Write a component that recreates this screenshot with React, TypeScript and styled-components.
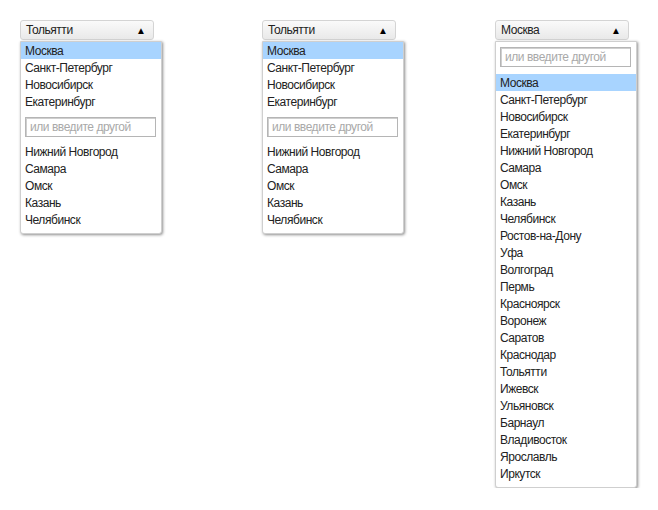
import React from 'react';
import styled, { createGlobalStyle } from 'styled-components';

const GlobalStyle = createGlobalStyle`
  body {
    margin: 0;
    background: #ffffff;
    font-family: Arial, "Liberation Sans", sans-serif;
    font-size: 12px;
    letter-spacing: -0.45px;
    color: #222222;
  }
`;

const Page = styled.div`
  display: grid;
  grid-template-columns: 242px 233px 142px;
  align-items: start;
  padding: 20px 0 0 20px;
`;

const Select = styled.div`
  display: flex;
  flex-direction: column;
  width: 142px;
`;

const Trigger = styled.div`
  box-sizing: border-box;
  display: flex;
  align-items: center;
  justify-content: space-between;
  width: 134px;
  height: 20px;
  padding: 0 7px 0 5px;
  border: 1px solid #d4d4d4;
  border-radius: 3px;
  background: linear-gradient(#fafafa, #e9e9e9);
  color: #222222;
`;

const Arrow = styled.span`
  font-size: 10px;
  letter-spacing: 0;
  color: #000000;
`;

const List = styled.div`
  box-sizing: border-box;
  width: 142px;
  margin-top: 1px;
  padding-bottom: 5px;
  border: 1px solid #cfcfcf;
  border-radius: 0 0 3px 3px;
  background: #ffffff;
  box-shadow: 1px 1px 3px rgba(0, 0, 0, 0.45);
`;

const Item = styled.div<{ $active?: boolean }>`
  height: 17px;
  line-height: 18px;
  padding-left: 4px;
  white-space: nowrap;
  background: ${(p) => (p.$active ? '#a8d4ff' : 'transparent')};
`;

const Search = styled.input<{ $top?: boolean }>`
  box-sizing: border-box;
  display: block;
  width: 131px;
  height: 20px;
  margin: ${(p) => (p.$top ? '5px 5px 7px 4px' : '7px 5px 6px 4px')};
  padding: 0 4px;
  border: 1px solid #b5b5b5;
  box-shadow: inset 1px 1px 0 #cfcfcf;
  font-family: Arial, "Liberation Sans", sans-serif;
  font-size: 12px;
  letter-spacing: -0.45px;
  outline: none;

  &::placeholder {
    color: #a9a9a9;
  }
`;

const top = ['Москва', 'Санкт-Петербург', 'Новосибирск', 'Екатеринбург'];
const rest = ['Нижний Новгород', 'Самара', 'Омск', 'Казань', 'Челябинск'];
const more = [
  'Ростов-на-Дону', 'Уфа', 'Волгоград', 'Пермь', 'Красноярск', 'Воронеж',
  'Саратов', 'Краснодар', 'Тольятти', 'Ижевск', 'Ульяновск', 'Барнаул',
  'Владивосток', 'Ярославль', 'Иркутск',
];

const Short: React.FC<{ value: string }> = ({ value }) => (
  <Select>
    <Trigger>
      {value}
      <Arrow>▲</Arrow>
    </Trigger>
    <List>
      {top.map((c, i) => (
        <Item key={c} $active={i === 0}>{c}</Item>
      ))}
      <Search placeholder="или введите другой" />
      {rest.map((c) => (
        <Item key={c}>{c}</Item>
      ))}
    </List>
  </Select>
);

const Long: React.FC<{ value: string }> = ({ value }) => (
  <Select>
    <Trigger>
      {value}
      <Arrow>▲</Arrow>
    </Trigger>
    <List>
      <Search $top placeholder="или введите другой" />
      {[...top, ...rest, ...more].map((c, i) => (
        <Item key={c} $active={i === 0}>{c}</Item>
      ))}
    </List>
  </Select>
);

export default function App() {
  return (
    <>
      <GlobalStyle />
      <Page>
        <Short value="Тольятти" />
        <Short value="Тольятти" />
        <Long value="Москва" />
      </Page>
    </>
  );
}
